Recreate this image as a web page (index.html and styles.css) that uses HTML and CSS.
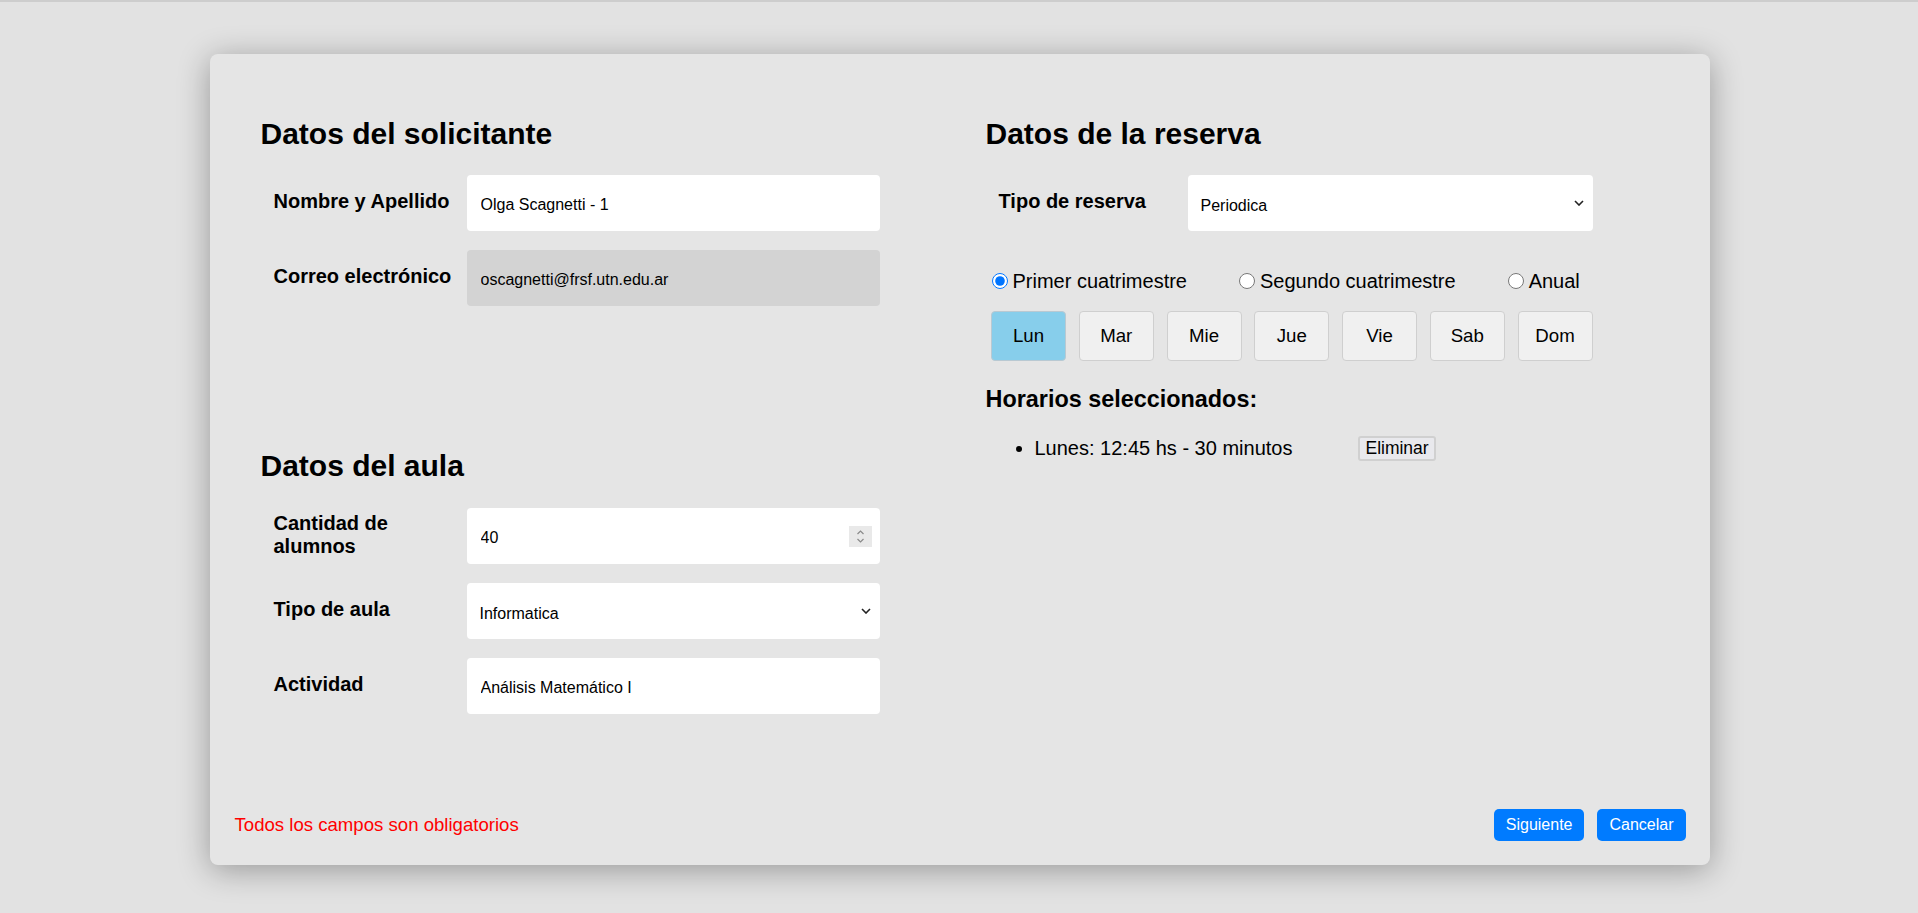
FILE: index.html
```html
<!DOCTYPE html>
<html lang="es">
<head>
<meta charset="utf-8">
<title>Reserva</title>
<link rel="stylesheet" href="styles.css">
</head>
<body>
<div class="modal">
  <div class="columns">
    <section class="col">
      <h2 class="section-title">Datos del solicitante</h2>
      <div class="row">
        <label class="label">Nombre y Apellido</label>
        <input class="field" type="text" value="Olga Scagnetti - 1">
      </div>
      <div class="row">
        <label class="label">Correo electrónico</label>
        <input class="field field-disabled" type="text" value="oscagnetti@frsf.utn.edu.ar" readonly>
      </div>

      <h2 class="section-title section-title-aula">Datos del aula</h2>
      <div class="row">
        <label class="label">Cantidad de alumnos</label>
        <div class="field-wrap">
          <input class="field field-number" type="number" value="40">
          <span class="spinner">
            <svg width="23" height="21" viewBox="0 0 23 21"><path d="M8.5 8 L11.5 5 L14.5 8" fill="none" stroke="#8a8a8a" stroke-width="1.2"/><path d="M8.5 13 L11.5 16 L14.5 13" fill="none" stroke="#8a8a8a" stroke-width="1.2"/></svg>
          </span>
        </div>
      </div>
      <div class="row">
        <label class="label">Tipo de aula</label>
        <div class="field-wrap">
          <select class="field select"><option>Informatica</option></select>
          <svg class="chevron" width="10" height="6" viewBox="0 0 10 6"><path d="M1 1 L5 5 L9 1" fill="none" stroke="#222" stroke-width="1.6"/></svg>
        </div>
      </div>
      <div class="row">
        <label class="label">Actividad</label>
        <input class="field" type="text" value="Análisis Matemático I">
      </div>
    </section>

    <section class="col">
      <h2 class="section-title">Datos de la reserva</h2>
      <div class="row">
        <label class="label label-right">Tipo de reserva</label>
        <div class="field-wrap">
          <select class="field field-right select"><option>Periodica</option></select>
          <svg class="chevron" width="10" height="6" viewBox="0 0 10 6"><path d="M1 1 L5 5 L9 1" fill="none" stroke="#222" stroke-width="1.6"/></svg>
        </div>
      </div>

      <div class="radios">
        <label class="radio"><input type="radio" name="periodo" checked>Primer cuatrimestre</label>
        <label class="radio"><input type="radio" name="periodo">Segundo cuatrimestre</label>
        <label class="radio"><input type="radio" name="periodo">Anual</label>
      </div>

      <div class="days">
        <button class="day day-active">Lun</button>
        <button class="day">Mar</button>
        <button class="day">Mie</button>
        <button class="day">Jue</button>
        <button class="day">Vie</button>
        <button class="day">Sab</button>
        <button class="day">Dom</button>
      </div>

      <h3 class="sub-title">Horarios seleccionados:</h3>
      <ul class="schedule">
        <li class="schedule-item">Lunes: 12:45 hs - 30 minutos<button class="remove">Eliminar</button></li>
      </ul>
    </section>
  </div>

  <footer class="modal-footer">
    <span class="required">Todos los campos son obligatorios</span>
    <div class="actions">
      <button class="btn">Siguiente</button>
      <button class="btn">Cancelar</button>
    </div>
  </footer>
</div>
</body>
</html>
```

FILE: styles.css
```css
* { box-sizing: border-box; }

html, body {
  margin: 0;
  padding: 0;
}

body {
  background: #e2e2e2;
  border-top: 2px solid #cdcdcd;
  padding-top: 52px;
  padding-left: 1px;
  font-family: "Liberation Sans", Arial, sans-serif;
  font-size: 20px;
  color: #000;
  height: 913px;
  overflow: hidden;
}

.modal {
  width: 1500px;
  height: 811px;
  margin: 0 auto;
  background: #e5e5e5;
  border-radius: 8px;
  box-shadow: 0 5px 32px rgba(0, 0, 0, 0.33);
  padding: 63px 0 24px 0;
  display: flex;
  flex-direction: column;
}

.columns {
  display: grid;
  grid-template-columns: 725px 1fr;
  padding: 0 50px 0 51px;
}

.col {
  display: flex;
  flex-direction: column;
}

.section-title {
  margin: 0 0 24px 0;
  font-size: 30px;
  line-height: 34px;
  font-weight: bold;
}

.section-title-aula {
  margin-top: 124px;
  margin-bottom: 25px;
}

.row {
  display: flex;
  align-items: center;
  padding-left: 13px;
  margin-bottom: 19px;
}

.label {
  flex: 0 0 193px;
  padding-right: 10px;
  font-weight: bold;
  font-size: 20px;
  line-height: 23px;
  padding-bottom: 3px;
}

.label-right {
  flex-basis: 189px;
}

.field-wrap {
  position: relative;
  display: flex;
}

.field {
  width: 413px;
  height: 56px;
  border: none;
  border-radius: 4px;
  background: #fff;
  padding: 4px 14px 0 14px;
  font-family: "Liberation Sans", Arial, sans-serif;
  font-size: 16px;
  color: #000;
  outline: none;
}

.field-right {
  width: 405px;
}

.field-disabled {
  background: #d3d3d3;
}

.select {
  appearance: none;
  -webkit-appearance: none;
  padding-left: 13px;
}

.chevron {
  position: absolute;
  right: 9px;
  top: 25px;
  pointer-events: none;
}

.field-number::-webkit-inner-spin-button,
.field-number::-webkit-outer-spin-button {
  -webkit-appearance: none;
  margin: 0;
}

.spinner {
  position: absolute;
  right: 8px;
  top: 18px;
  width: 23px;
  height: 21px;
  background: #e9e9e9;
  display: block;
}

.spinner svg { display: block; }

.radios {
  display: flex;
  gap: 47px;
  margin-top: 19.5px;
  padding-left: 1px;
  height: 23px;
}

.radio {
  display: flex;
  align-items: center;
  font-size: 20px;
  line-height: 23px;
}

.radio input {
  width: 16px;
  height: 16px;
  margin: 0 5px 0 5px;
}

.days {
  display: flex;
  gap: 12.75px;
  margin-top: 18.5px;
  padding-left: 5.5px;
}

.day {
  width: 75px;
  height: 50px;
  background: #f0f0f0;
  border: 1px solid #cfcfcf;
  border-radius: 4px;
  font-family: "Liberation Sans", Arial, sans-serif;
  font-size: 18.67px;
  color: #000;
  padding: 0;
}

.day-active {
  background: #87ceeb;
  border-color: #b9c9d2;
}

.sub-title {
  margin: 24.5px 0 0 0;
  font-size: 23.4px;
  line-height: 27px;
  font-weight: bold;
}

.schedule {
  margin: 23px 0 0 0;
  padding-left: 49px;
}

.schedule-item {
  font-size: 20px;
  line-height: 25px;
}

.remove {
  margin-left: 66px;
  height: 25px;
  padding: 0 5px;
  vertical-align: middle;
  position: relative;
  top: -1px;
  background: #e9e9ed;
  border: 2px solid #d0d0d0;
  border-radius: 3px;
  font-family: "Liberation Sans", Arial, sans-serif;
  font-size: 17.5px;
  line-height: 20px;
  color: #000;
}

.modal-footer {
  margin-top: auto;
  display: flex;
  justify-content: space-between;
  align-items: center;
  padding: 0 24px 0 25px;
}

.required {
  color: #ff0000;
  font-size: 18.6px;
  line-height: 22px;
}

.actions {
  display: flex;
  gap: 13px;
}

.btn {
  height: 32px;
  padding: 0 12px;
  background: #007bff;
  color: #fff;
  border: none;
  border-radius: 5px;
  font-family: "Liberation Sans", Arial, sans-serif;
  font-size: 16px;
}
```
